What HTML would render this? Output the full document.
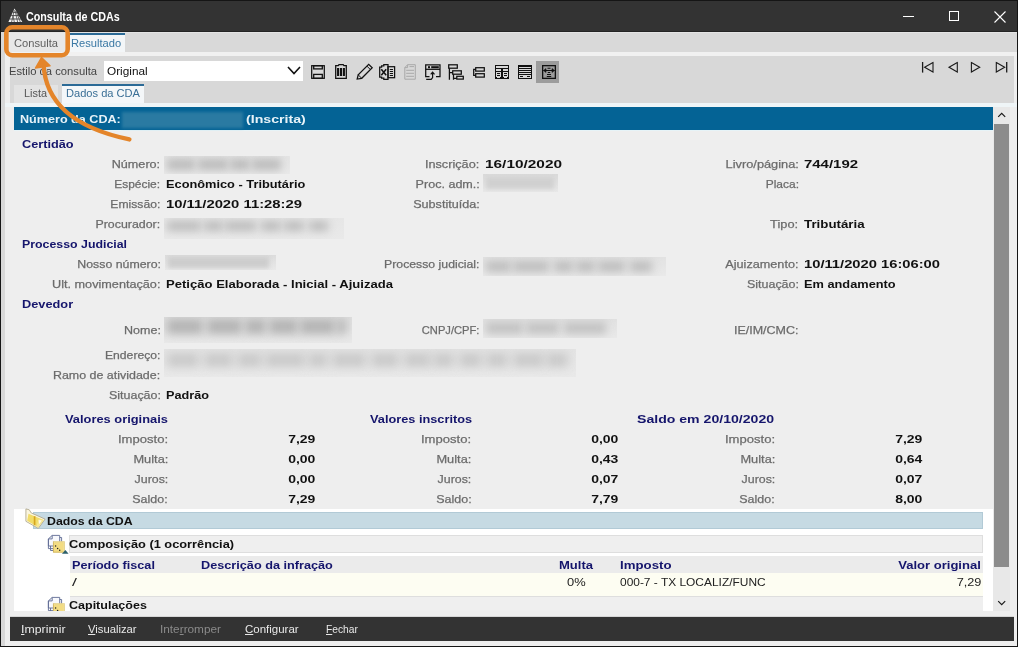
<!DOCTYPE html>
<html><head><meta charset="utf-8"><style>
html,body{margin:0;padding:0;}
body{width:1018px;height:647px;position:relative;overflow:hidden;background:#f0f0f0;font-family:"Liberation Sans",sans-serif;}
.t{position:absolute;white-space:nowrap;line-height:1;}
.r{position:absolute;box-sizing:border-box;}
svg.r{overflow:visible}
</style></head><body>
<div class="r" style="left:0px;top:0px;width:1018px;height:647px;background:#151515;"></div>
<div class="r" style="left:1px;top:1px;width:1016px;height:31px;background:#333333;"></div>
<div class="r" style="left:1px;top:31px;width:1016px;height:1px;background:#242424;"></div>
<div class="r" style="left:1px;top:32px;width:1016px;height:614px;background:#eeeeee;"></div>
<div class="r" style="left:1px;top:32px;width:4px;height:614px;background:#d8d8d8;"></div>
<div class="r" style="left:5px;top:32px;width:1012px;height:1px;background:#e4e4e4;"></div>
<div class="r" style="left:5px;top:33px;width:1012px;height:19px;background:#d9d9d9;"></div>
<div class="r" style="left:9px;top:33px;width:58px;height:19px;background:#e8e8e8;"></div>
<div class="r" style="left:69px;top:33px;width:56px;height:19px;background:#f3f6f8;"></div>
<div class="r" style="left:69px;top:33px;width:56px;height:2px;background:#2b6a96;"></div>
<div class="r" style="left:5px;top:52px;width:1012px;height:4px;background:#f1f1f1;"></div>
<div class="r" style="left:10px;top:56px;width:1004px;height:47px;background:#d8d8d8;"></div>
<div class="r" style="left:104px;top:61px;width:199px;height:20px;background:#ffffff;"></div>
<div class="r" style="left:14px;top:85px;width:44px;height:18px;background:#e3e3e3;"></div>
<div class="r" style="left:62px;top:84px;width:82px;height:20px;background:#f4f7f9;"></div>
<div class="r" style="left:62px;top:84px;width:82px;height:2px;background:#2b6a96;"></div>
<div class="r" style="left:5px;top:103px;width:1012px;height:4px;background:#eff5f7;"></div>
<div class="r" style="left:14px;top:107px;width:979px;height:23px;background:#046395;"></div>
<div class="r" style="left:14px;top:130px;width:979px;height:1px;background:#e6f3f7;"></div>
<div class="r" style="left:993px;top:107px;width:17px;height:504px;background:#e8e8e8;"></div>
<div class="r" style="left:994px;top:124px;width:15px;height:443px;background:#8c8c8c;"></div>
<div class="r" style="left:14px;top:509px;width:979px;height:102px;background:#ffffff;"></div>
<div class="r" style="left:10px;top:616px;width:1004px;height:1px;background:#d6d6d6;"></div>
<div class="r" style="left:10px;top:617px;width:1004px;height:24px;background:#333333;"></div>
<svg class="r" style="left:0;top:0" width="30" height="30" viewBox="0 0 30 30">
<polygon points="14.5,8.6 22.3,22 8.4,22" fill="#f4f4f4"/>
<path d="M9.5,19 H21 M11.2,15.6 H19 M12.8,12.4 H16.8" stroke="#3a3a3a" stroke-width="0.9" fill="none"/>
<path d="M14.3,10 L11.6,22 M15.2,11 L17.6,22 M13,15.6 L14.3,22 M16.5,12.4 L20.3,22" stroke="#4a4a4a" stroke-width="0.8" fill="none"/>
</svg>
<div class="t" style="left:26.00px;top:11.44px;font-size:12px;color:#ffffff;font-weight:bold;letter-spacing:0.0px;transform:scaleX(0.8941);transform-origin:left center;">Consulta de CDAs</div>
<div class="r" style="left:903px;top:16px;width:11px;height:1px;background:#ffffff;"></div>
<div class="r" style="left:949px;top:11px;width:10px;height:10px;border:1px solid #fff;"></div>
<svg class="r" style="left:994px;top:11px" width="12" height="12" viewBox="0 0 12 12"><path d="M0.5,0.5 L11.5,11.5 M11.5,0.5 L0.5,11.5" stroke="#fff" stroke-width="1.1"/></svg>
<div class="t" style="left:14.00px;top:38.49px;font-size:11px;color:#5f5f5f;font-weight:normal;letter-spacing:0.0px;transform:scaleX(1.0133);transform-origin:left center;">Consulta</div>
<div class="t" style="left:70.50px;top:38.49px;font-size:11px;color:#3a78a4;font-weight:normal;letter-spacing:0.0px;transform:scaleX(1.0132);transform-origin:left center;">Resultado</div>
<div class="t" style="left:9.20px;top:66.39px;font-size:11px;color:#444;font-weight:normal;letter-spacing:0.0px;transform:scaleX(1.0207);transform-origin:left center;">Estilo da consulta</div>
<div class="t" style="left:106.60px;top:66.39px;font-size:11px;color:#111;font-weight:normal;letter-spacing:0.0px;transform:scaleX(1.0711);transform-origin:left center;">Original</div>
<div class="t" style="left:23.90px;top:88.39px;font-size:11px;color:#555;font-weight:normal;letter-spacing:0.0px;transform:scaleX(0.9892);transform-origin:left center;">Lista</div>
<div class="t" style="left:66.30px;top:88.39px;font-size:11px;color:#3a6f96;font-weight:normal;letter-spacing:0.0px;transform:scaleX(1.0085);transform-origin:left center;">Dados da CDA</div>
<svg class="r" style="left:287px;top:66px" width="14" height="9" viewBox="0 0 14 9"><path d="M1,1 L7,7.5 L13,1" stroke="#111" stroke-width="1.6" fill="none"/></svg>
<div class="t" style="left:19.80px;top:114.17px;font-size:11.5px;color:#e6f2f8;font-weight:bold;letter-spacing:0.0px;transform:scaleX(1.0955);transform-origin:left center;">Número da CDA:</div>
<div class="r" style="left:122px;top:112px;width:121px;height:16px;background:#2a7aa2;filter:blur(1.5px)"></div>
<div class="t" style="left:246.00px;top:114.17px;font-size:11.5px;color:#e6f2f8;font-weight:bold;letter-spacing:0.0px;transform:scaleX(1.2314);transform-origin:left center;">(Inscrita)</div>
<svg class="r" style="left:0;top:0" width="1018" height="647" viewBox="0 0 1018 647"><path d="M998.2,116.8 L1001.7,113.3 L1005.2,116.8" stroke="#1a1a1a" stroke-width="1.2" fill="none"/><path d="M998.2,601.2 L1001.7,604.7 L1005.2,601.2" stroke="#1a1a1a" stroke-width="1.2" fill="none"/></svg>
<div class="t" style="left:22.00px;top:138.87px;font-size:11.5px;color:#15156c;font-weight:bold;letter-spacing:0.0px;transform:scaleX(1.1067);transform-origin:left center;">Certidão</div>
<div class="t" style="right:857.50px;top:159.27px;font-size:11.5px;color:#6b6b6b;font-weight:normal;letter-spacing:0.0px;-webkit-text-stroke:0.25px #6b6b6b;transform:scaleX(1.0967);transform-origin:right center;">Número:</div>
<div class="r" style="left:164px;top:156px;width:126px;height:18px;background:linear-gradient(#e4e4e4,#e9e9e9);overflow:hidden"><div style="position:absolute;left:3px;top:3px;width:28px;height:11px;background:#bababa;filter:blur(4.5px)"></div><div style="position:absolute;left:34px;top:3px;width:30px;height:11px;background:#bababa;filter:blur(4.5px)"></div><div style="position:absolute;left:66px;top:3px;width:20px;height:11px;background:#bababa;filter:blur(4.5px)"></div><div style="position:absolute;left:88px;top:3px;width:29px;height:11px;background:#bababa;filter:blur(4.5px)"></div></div>
<div class="t" style="right:538.50px;top:159.27px;font-size:11.5px;color:#6b6b6b;font-weight:normal;letter-spacing:0.0px;-webkit-text-stroke:0.25px #6b6b6b;transform:scaleX(1.1029);transform-origin:right center;">Inscrição:</div>
<div class="t" style="left:485.00px;top:159.27px;font-size:11.5px;color:#111;font-weight:bold;letter-spacing:0.0px;transform:scaleX(1.3380);transform-origin:left center;">16/10/2020</div>
<div class="t" style="right:219.50px;top:159.27px;font-size:11.5px;color:#6b6b6b;font-weight:normal;letter-spacing:0.0px;-webkit-text-stroke:0.25px #6b6b6b;transform:scaleX(1.1122);transform-origin:right center;">Livro/página:</div>
<div class="t" style="left:804.00px;top:159.27px;font-size:11.5px;color:#111;font-weight:bold;letter-spacing:0.0px;transform:scaleX(1.2990);transform-origin:left center;">744/192</div>
<div class="t" style="right:857.50px;top:179.27px;font-size:11.5px;color:#6b6b6b;font-weight:normal;letter-spacing:0.0px;-webkit-text-stroke:0.25px #6b6b6b;transform:scaleX(1.0421);transform-origin:right center;">Espécie:</div>
<div class="t" style="left:165.60px;top:179.27px;font-size:11.5px;color:#111;font-weight:bold;letter-spacing:0.0px;transform:scaleX(1.1122);transform-origin:left center;">Econômico - Tributário</div>
<div class="t" style="right:538.50px;top:179.27px;font-size:11.5px;color:#6b6b6b;font-weight:normal;letter-spacing:0.0px;-webkit-text-stroke:0.25px #6b6b6b;transform:scaleX(1.0914);transform-origin:right center;">Proc. adm.:</div>
<div class="r" style="left:483px;top:174px;width:75px;height:18px;background:linear-gradient(#dadada,#e9e9e9);overflow:hidden"><div style="position:absolute;left:3px;top:3px;width:68px;height:12px;background:#d0d0d0;filter:blur(2.2px)"></div></div>
<div class="t" style="right:219.50px;top:179.27px;font-size:11.5px;color:#6b6b6b;font-weight:normal;letter-spacing:0.0px;-webkit-text-stroke:0.25px #6b6b6b;transform:scaleX(1.0413);transform-origin:right center;">Placa:</div>
<div class="t" style="right:857.50px;top:199.27px;font-size:11.5px;color:#6b6b6b;font-weight:normal;letter-spacing:0.0px;-webkit-text-stroke:0.25px #6b6b6b;transform:scaleX(1.0562);transform-origin:right center;">Emissão:</div>
<div class="t" style="left:165.60px;top:199.27px;font-size:11.5px;color:#111;font-weight:bold;letter-spacing:0.0px;transform:scaleX(1.2888);transform-origin:left center;">10/11/2020 11:28:29</div>
<div class="t" style="right:538.50px;top:199.27px;font-size:11.5px;color:#6b6b6b;font-weight:normal;letter-spacing:0.0px;-webkit-text-stroke:0.25px #6b6b6b;transform:scaleX(1.0962);transform-origin:right center;">Substituída:</div>
<div class="t" style="right:857.50px;top:219.27px;font-size:11.5px;color:#6b6b6b;font-weight:normal;letter-spacing:0.0px;-webkit-text-stroke:0.25px #6b6b6b;transform:scaleX(1.0756);transform-origin:right center;">Procurador:</div>
<div class="r" style="left:164px;top:218px;width:180px;height:21px;background:linear-gradient(#e6e6e6,#e9e9e9);overflow:hidden"><div style="position:absolute;left:3px;top:3px;width:34px;height:10px;background:#bcbcbc;filter:blur(4.5px)"></div><div style="position:absolute;left:40px;top:3px;width:19px;height:10px;background:#bcbcbc;filter:blur(4.5px)"></div><div style="position:absolute;left:61px;top:3px;width:31px;height:10px;background:#bcbcbc;filter:blur(4.5px)"></div><div style="position:absolute;left:97px;top:3px;width:20px;height:10px;background:#bcbcbc;filter:blur(4.5px)"></div><div style="position:absolute;left:120px;top:3px;width:20px;height:10px;background:#bcbcbc;filter:blur(4.5px)"></div><div style="position:absolute;left:145px;top:3px;width:19px;height:10px;background:#bcbcbc;filter:blur(4.5px)"></div></div>
<div class="t" style="right:219.50px;top:219.27px;font-size:11.5px;color:#6b6b6b;font-weight:normal;letter-spacing:0.0px;-webkit-text-stroke:0.25px #6b6b6b;transform:scaleX(1.1160);transform-origin:right center;">Tipo:</div>
<div class="t" style="left:804.00px;top:219.27px;font-size:11.5px;color:#111;font-weight:bold;letter-spacing:0.0px;transform:scaleX(1.1571);transform-origin:left center;">Tributária</div>
<div class="t" style="left:21.60px;top:239.27px;font-size:11.5px;color:#15156c;font-weight:bold;letter-spacing:0.0px;transform:scaleX(1.0735);transform-origin:left center;">Processo Judicial</div>
<div class="t" style="right:857.50px;top:259.27px;font-size:11.5px;color:#6b6b6b;font-weight:normal;letter-spacing:0.0px;-webkit-text-stroke:0.25px #6b6b6b;transform:scaleX(1.0733);transform-origin:right center;">Nosso número:</div>
<div class="r" style="left:165px;top:255px;width:111px;height:15px;background:linear-gradient(#dcdcdc,#e9e9e9);overflow:hidden"><div style="position:absolute;left:3px;top:2px;width:101px;height:11px;background:#cdcdcd;filter:blur(2.2px)"></div></div>
<div class="t" style="right:538.50px;top:259.27px;font-size:11.5px;color:#6b6b6b;font-weight:normal;letter-spacing:0.0px;-webkit-text-stroke:0.25px #6b6b6b;transform:scaleX(1.0662);transform-origin:right center;">Processo judicial:</div>
<div class="r" style="left:483px;top:257px;width:183px;height:19px;background:linear-gradient(#e2e2e2,#e9e9e9);overflow:hidden"><div style="position:absolute;left:3px;top:4px;width:25px;height:11px;background:#bdbdbd;filter:blur(4.5px)"></div><div style="position:absolute;left:30px;top:4px;width:36px;height:11px;background:#bdbdbd;filter:blur(4.5px)"></div><div style="position:absolute;left:71px;top:4px;width:19px;height:11px;background:#bdbdbd;filter:blur(4.5px)"></div><div style="position:absolute;left:93px;top:4px;width:19px;height:11px;background:#bdbdbd;filter:blur(4.5px)"></div><div style="position:absolute;left:115px;top:4px;width:27px;height:11px;background:#bdbdbd;filter:blur(4.5px)"></div><div style="position:absolute;left:147px;top:4px;width:22px;height:11px;background:#bdbdbd;filter:blur(4.5px)"></div></div>
<div class="t" style="right:219.50px;top:259.27px;font-size:11.5px;color:#6b6b6b;font-weight:normal;letter-spacing:0.0px;-webkit-text-stroke:0.25px #6b6b6b;transform:scaleX(1.1014);transform-origin:right center;">Ajuizamento:</div>
<div class="t" style="left:804.00px;top:259.27px;font-size:11.5px;color:#111;font-weight:bold;letter-spacing:0.0px;transform:scaleX(1.2812);transform-origin:left center;">10/11/2020 16:06:00</div>
<div class="t" style="right:857.50px;top:279.27px;font-size:11.5px;color:#6b6b6b;font-weight:normal;letter-spacing:0.0px;-webkit-text-stroke:0.25px #6b6b6b;transform:scaleX(1.1009);transform-origin:right center;">Ult. movimentação:</div>
<div class="t" style="left:165.60px;top:279.27px;font-size:11.5px;color:#111;font-weight:bold;letter-spacing:0.0px;transform:scaleX(1.1371);transform-origin:left center;">Petição Elaborada - Inicial - Ajuizada</div>
<div class="t" style="right:219.50px;top:279.27px;font-size:11.5px;color:#6b6b6b;font-weight:normal;letter-spacing:0.0px;-webkit-text-stroke:0.25px #6b6b6b;transform:scaleX(1.0840);transform-origin:right center;">Situação:</div>
<div class="t" style="left:804.00px;top:279.27px;font-size:11.5px;color:#111;font-weight:bold;letter-spacing:0.0px;transform:scaleX(1.1116);transform-origin:left center;">Em andamento</div>
<div class="t" style="left:22.00px;top:299.27px;font-size:11.5px;color:#15156c;font-weight:bold;letter-spacing:0.0px;transform:scaleX(1.1108);transform-origin:left center;">Devedor</div>
<div class="t" style="right:857.50px;top:325.27px;font-size:11.5px;color:#6b6b6b;font-weight:normal;letter-spacing:0.0px;-webkit-text-stroke:0.25px #6b6b6b;transform:scaleX(1.0869);transform-origin:right center;">Nome:</div>
<div class="r" style="left:164px;top:317px;width:188px;height:26px;background:linear-gradient(#dedede,#e9e9e9);overflow:hidden"><div style="position:absolute;left:3px;top:2px;width:36px;height:15px;background:#b4b4b4;filter:blur(5.0px)"></div><div style="position:absolute;left:43px;top:2px;width:35px;height:15px;background:#b4b4b4;filter:blur(5.0px)"></div><div style="position:absolute;left:81px;top:2px;width:21px;height:15px;background:#b4b4b4;filter:blur(5.0px)"></div><div style="position:absolute;left:105px;top:2px;width:29px;height:15px;background:#b4b4b4;filter:blur(5.0px)"></div><div style="position:absolute;left:136px;top:2px;width:35px;height:15px;background:#b4b4b4;filter:blur(5.0px)"></div><div style="position:absolute;left:173px;top:2px;width:9px;height:15px;background:#b4b4b4;filter:blur(5.0px)"></div></div>
<div class="t" style="right:538.50px;top:325.27px;font-size:11.5px;color:#6b6b6b;font-weight:normal;letter-spacing:0.0px;-webkit-text-stroke:0.25px #6b6b6b;transform:scaleX(0.9700);transform-origin:right center;">CNPJ/CPF:</div>
<div class="r" style="left:483px;top:319px;width:134px;height:19px;background:linear-gradient(#e1e1e1,#e9e9e9);overflow:hidden"><div style="position:absolute;left:3px;top:3px;width:37px;height:12px;background:#c2c2c2;filter:blur(4.5px)"></div><div style="position:absolute;left:43px;top:3px;width:33px;height:12px;background:#c2c2c2;filter:blur(4.5px)"></div><div style="position:absolute;left:81px;top:3px;width:42px;height:12px;background:#c2c2c2;filter:blur(4.5px)"></div></div>
<div class="t" style="right:219.50px;top:325.27px;font-size:11.5px;color:#6b6b6b;font-weight:normal;letter-spacing:0.0px;-webkit-text-stroke:0.25px #6b6b6b;transform:scaleX(1.0856);transform-origin:right center;">IE/IM/CMC:</div>
<div class="t" style="right:857.50px;top:350.27px;font-size:11.5px;color:#6b6b6b;font-weight:normal;letter-spacing:0.0px;-webkit-text-stroke:0.25px #6b6b6b;transform:scaleX(1.0578);transform-origin:right center;">Endereço:</div>
<div class="r" style="left:164px;top:349px;width:412px;height:28px;background:linear-gradient(#e4e4e4,#e9e9e9);overflow:hidden"><div style="position:absolute;left:3px;top:4px;width:32px;height:14px;background:#cacaca;filter:blur(5.0px)"></div><div style="position:absolute;left:40px;top:4px;width:29px;height:14px;background:#cacaca;filter:blur(5.0px)"></div><div style="position:absolute;left:73px;top:4px;width:25px;height:14px;background:#cacaca;filter:blur(5.0px)"></div><div style="position:absolute;left:101px;top:4px;width:40px;height:14px;background:#cacaca;filter:blur(5.0px)"></div><div style="position:absolute;left:144px;top:4px;width:20px;height:14px;background:#cacaca;filter:blur(5.0px)"></div><div style="position:absolute;left:168px;top:4px;width:34px;height:14px;background:#cacaca;filter:blur(5.0px)"></div><div style="position:absolute;left:207px;top:4px;width:28px;height:14px;background:#cacaca;filter:blur(5.0px)"></div><div style="position:absolute;left:240px;top:4px;width:27px;height:14px;background:#cacaca;filter:blur(5.0px)"></div><div style="position:absolute;left:269px;top:4px;width:21px;height:14px;background:#cacaca;filter:blur(5.0px)"></div><div style="position:absolute;left:295px;top:4px;width:23px;height:14px;background:#cacaca;filter:blur(5.0px)"></div><div style="position:absolute;left:322px;top:4px;width:22px;height:14px;background:#cacaca;filter:blur(5.0px)"></div><div style="position:absolute;left:349px;top:4px;width:31px;height:14px;background:#cacaca;filter:blur(5.0px)"></div><div style="position:absolute;left:382px;top:4px;width:22px;height:14px;background:#cacaca;filter:blur(5.0px)"></div></div>
<div class="t" style="right:857.50px;top:370.27px;font-size:11.5px;color:#6b6b6b;font-weight:normal;letter-spacing:0.0px;-webkit-text-stroke:0.25px #6b6b6b;transform:scaleX(1.0814);transform-origin:right center;">Ramo de atividade:</div>
<div class="t" style="right:857.50px;top:390.27px;font-size:11.5px;color:#6b6b6b;font-weight:normal;letter-spacing:0.0px;-webkit-text-stroke:0.25px #6b6b6b;transform:scaleX(1.0840);transform-origin:right center;">Situação:</div>
<div class="t" style="left:165.60px;top:390.27px;font-size:11.5px;color:#111;font-weight:bold;letter-spacing:0.0px;transform:scaleX(1.1045);transform-origin:left center;">Padrão</div>
<div class="t" style="left:65.00px;top:414.27px;font-size:11.5px;color:#15156c;font-weight:bold;letter-spacing:0.0px;transform:scaleX(1.1177);transform-origin:left center;">Valores originais</div>
<div class="t" style="left:370.00px;top:414.27px;font-size:11.5px;color:#15156c;font-weight:bold;letter-spacing:0.0px;transform:scaleX(1.1092);transform-origin:left center;">Valores inscritos</div>
<div class="t" style="left:637.30px;top:414.27px;font-size:11.5px;color:#15156c;font-weight:bold;letter-spacing:0.0px;transform:scaleX(1.2253);transform-origin:left center;">Saldo em 20/10/2020</div>
<div class="t" style="right:850.00px;top:434.27px;font-size:11.5px;color:#6b6b6b;font-weight:normal;letter-spacing:0.0px;-webkit-text-stroke:0.25px #6b6b6b;transform:scaleX(1.1367);transform-origin:right center;">Imposto:</div>
<div class="t" style="right:703.00px;top:434.27px;font-size:11.5px;color:#111;font-weight:bold;letter-spacing:0.0px;transform:scaleX(1.2141);transform-origin:right center;">7,29</div>
<div class="t" style="right:546.50px;top:434.27px;font-size:11.5px;color:#6b6b6b;font-weight:normal;letter-spacing:0.0px;-webkit-text-stroke:0.25px #6b6b6b;transform:scaleX(1.1367);transform-origin:right center;">Imposto:</div>
<div class="t" style="right:399.50px;top:434.27px;font-size:11.5px;color:#111;font-weight:bold;letter-spacing:0.0px;transform:scaleX(1.2141);transform-origin:right center;">0,00</div>
<div class="t" style="right:243.00px;top:434.27px;font-size:11.5px;color:#6b6b6b;font-weight:normal;letter-spacing:0.0px;-webkit-text-stroke:0.25px #6b6b6b;transform:scaleX(1.1367);transform-origin:right center;">Imposto:</div>
<div class="t" style="right:95.50px;top:434.27px;font-size:11.5px;color:#111;font-weight:bold;letter-spacing:0.0px;transform:scaleX(1.2141);transform-origin:right center;">7,29</div>
<div class="t" style="right:850.00px;top:454.27px;font-size:11.5px;color:#6b6b6b;font-weight:normal;letter-spacing:0.0px;-webkit-text-stroke:0.25px #6b6b6b;transform:scaleX(1.1130);transform-origin:right center;">Multa:</div>
<div class="t" style="right:703.00px;top:454.27px;font-size:11.5px;color:#111;font-weight:bold;letter-spacing:0.0px;transform:scaleX(1.2141);transform-origin:right center;">0,00</div>
<div class="t" style="right:546.50px;top:454.27px;font-size:11.5px;color:#6b6b6b;font-weight:normal;letter-spacing:0.0px;-webkit-text-stroke:0.25px #6b6b6b;transform:scaleX(1.1130);transform-origin:right center;">Multa:</div>
<div class="t" style="right:399.50px;top:454.27px;font-size:11.5px;color:#111;font-weight:bold;letter-spacing:0.0px;transform:scaleX(1.2141);transform-origin:right center;">0,43</div>
<div class="t" style="right:243.00px;top:454.27px;font-size:11.5px;color:#6b6b6b;font-weight:normal;letter-spacing:0.0px;-webkit-text-stroke:0.25px #6b6b6b;transform:scaleX(1.1130);transform-origin:right center;">Multa:</div>
<div class="t" style="right:95.50px;top:454.27px;font-size:11.5px;color:#111;font-weight:bold;letter-spacing:0.0px;transform:scaleX(1.2141);transform-origin:right center;">0,64</div>
<div class="t" style="right:850.00px;top:474.27px;font-size:11.5px;color:#6b6b6b;font-weight:normal;letter-spacing:0.0px;-webkit-text-stroke:0.25px #6b6b6b;transform:scaleX(1.0775);transform-origin:right center;">Juros:</div>
<div class="t" style="right:703.00px;top:474.27px;font-size:11.5px;color:#111;font-weight:bold;letter-spacing:0.0px;transform:scaleX(1.2141);transform-origin:right center;">0,00</div>
<div class="t" style="right:546.50px;top:474.27px;font-size:11.5px;color:#6b6b6b;font-weight:normal;letter-spacing:0.0px;-webkit-text-stroke:0.25px #6b6b6b;transform:scaleX(1.0775);transform-origin:right center;">Juros:</div>
<div class="t" style="right:399.50px;top:474.27px;font-size:11.5px;color:#111;font-weight:bold;letter-spacing:0.0px;transform:scaleX(1.2141);transform-origin:right center;">0,07</div>
<div class="t" style="right:243.00px;top:474.27px;font-size:11.5px;color:#6b6b6b;font-weight:normal;letter-spacing:0.0px;-webkit-text-stroke:0.25px #6b6b6b;transform:scaleX(1.0775);transform-origin:right center;">Juros:</div>
<div class="t" style="right:95.50px;top:474.27px;font-size:11.5px;color:#111;font-weight:bold;letter-spacing:0.0px;transform:scaleX(1.2141);transform-origin:right center;">0,07</div>
<div class="t" style="right:850.00px;top:494.27px;font-size:11.5px;color:#6b6b6b;font-weight:normal;letter-spacing:0.0px;-webkit-text-stroke:0.25px #6b6b6b;transform:scaleX(1.0840);transform-origin:right center;">Saldo:</div>
<div class="t" style="right:703.00px;top:494.27px;font-size:11.5px;color:#111;font-weight:bold;letter-spacing:0.0px;transform:scaleX(1.2141);transform-origin:right center;">7,29</div>
<div class="t" style="right:546.50px;top:494.27px;font-size:11.5px;color:#6b6b6b;font-weight:normal;letter-spacing:0.0px;-webkit-text-stroke:0.25px #6b6b6b;transform:scaleX(1.0840);transform-origin:right center;">Saldo:</div>
<div class="t" style="right:399.50px;top:494.27px;font-size:11.5px;color:#111;font-weight:bold;letter-spacing:0.0px;transform:scaleX(1.2141);transform-origin:right center;">7,79</div>
<div class="t" style="right:243.00px;top:494.27px;font-size:11.5px;color:#6b6b6b;font-weight:normal;letter-spacing:0.0px;-webkit-text-stroke:0.25px #6b6b6b;transform:scaleX(1.0840);transform-origin:right center;">Saldo:</div>
<div class="t" style="right:95.50px;top:494.27px;font-size:11.5px;color:#111;font-weight:bold;letter-spacing:0.0px;transform:scaleX(1.2141);transform-origin:right center;">8,00</div>
<div class="r" style="left:33px;top:512px;width:950px;height:17px;background:#c6dae3;box-shadow: inset 0 0 0 1px #b2cad6;"></div>
<div class="t" style="left:46.60px;top:515.57px;font-size:11.5px;color:#111;font-weight:bold;letter-spacing:0.0px;transform:scaleX(1.0723);transform-origin:left center;">Dados da CDA</div>
<div class="r" style="left:69px;top:535px;width:914px;height:18px;background:#efefef;box-shadow: inset 0 0 0 1px #dedede;"></div>
<div class="t" style="left:69.00px;top:539.27px;font-size:11.5px;color:#111;font-weight:bold;letter-spacing:0.0px;transform:scaleX(1.1133);transform-origin:left center;">Composição (1 ocorrência)</div>
<div class="r" style="left:70px;top:556px;width:913px;height:17px;background:#ebebeb;"></div>
<div class="r" style="left:70px;top:573px;width:913px;height:23px;background:#fdfdf2;"></div>
<div class="r" style="left:70px;top:596px;width:913px;height:15px;background:#efefef;box-shadow: inset 0 1px 0 0 #dedede;"></div>
<div class="t" style="left:69.00px;top:599.97px;font-size:11.5px;color:#111;font-weight:bold;letter-spacing:0.0px;transform:scaleX(1.0877);transform-origin:left center;">Capitulações</div>
<div class="t" style="left:71.80px;top:560.27px;font-size:11.5px;color:#15156c;font-weight:bold;letter-spacing:0.0px;transform:scaleX(1.0992);transform-origin:left center;">Período fiscal</div>
<div class="t" style="left:200.60px;top:560.27px;font-size:11.5px;color:#15156c;font-weight:bold;letter-spacing:0.0px;transform:scaleX(1.1027);transform-origin:left center;">Descrição da infração</div>
<div class="t" style="right:425.00px;top:560.27px;font-size:11.5px;color:#15156c;font-weight:bold;letter-spacing:0.0px;transform:scaleX(1.1346);transform-origin:right center;">Multa</div>
<div class="t" style="left:620.00px;top:560.27px;font-size:11.5px;color:#15156c;font-weight:bold;letter-spacing:0.0px;transform:scaleX(1.1515);transform-origin:left center;">Imposto</div>
<div class="t" style="right:37.00px;top:560.27px;font-size:11.5px;color:#15156c;font-weight:bold;letter-spacing:0.0px;transform:scaleX(1.1353);transform-origin:right center;">Valor original</div>
<div class="t" style="left:72.00px;top:576.57px;font-size:11.5px;color:#222;font-weight:normal;letter-spacing:0.0px;transform:scaleX(1.5449);transform-origin:left center;">/</div>
<div class="t" style="right:432.00px;top:576.57px;font-size:11.5px;color:#222;font-weight:normal;letter-spacing:0.0px;transform:scaleX(1.1225);transform-origin:right center;">0%</div>
<div class="t" style="left:620.00px;top:576.57px;font-size:11.5px;color:#222;font-weight:normal;letter-spacing:0.0px;transform:scaleX(1.0372);transform-origin:left center;">000-7 - TX LOCALIZ/FUNC</div>
<div class="t" style="right:37.00px;top:576.57px;font-size:11.5px;color:#222;font-weight:normal;letter-spacing:0.0px;transform:scaleX(1.1060);transform-origin:right center;">7,29</div>
<svg class="r" style="left:0;top:0" width="1018" height="647" viewBox="0 0 1018 647">
<path d="M25.9,508.9 L29.3,509.8 L31.2,512.9 L45.1,519.1 L38.3,528.4 L25.9,521.3 Z" fill="#fbf6df" stroke="#aaa184" stroke-width="0.8" stroke-linejoin="round"/>
<path d="M28.5,513.8 L43.6,519.9 L38,527.3 L27.2,520.8 Z" fill="#f2dc68"/>
<path d="M38.6,519 L43.6,519.9 L38,527.3 L36.5,526.5 Z" fill="#f6e690"/>
<path d="M34.6,516.2 V525.2" stroke="#d6a51e" stroke-width="1.7"/>
<path d="M38.6,519.9 L41.8,520.5 L39.2,524.3 Z" fill="#fffbea"/>
</svg>
<div class="r" style="left:0;top:0;width:1018px;height:611px;overflow:hidden"><svg style="position:absolute;left:0;top:0px" width="1018" height="647" viewBox="0 0 1018 647">
<path d="M50.5,537.5 H61.6 V550.5 H50.5 Z" fill="#f5f6fb" stroke="#5f6b93" stroke-width="0.9"/>
<path d="M52.2,535.4 H59.7 V546 H48.4 V538.9 Z" fill="#f7f8fc" stroke="#5f6b93" stroke-width="0.9"/>
<path d="M48.4,538.9 H52.2 V535.4" fill="none" stroke="#5f6b93" stroke-width="0.9"/>
<path d="M48.4,538.9 V548.6 H53" fill="none" stroke="#5f6b93" stroke-width="0.9"/>
<rect x="53.4" y="541.8" width="10.8" height="10.4" fill="#f3dc82" stroke="#cfb257" stroke-width="0.9"/>
<path d="M53.8,542.3 L55.3,541.9 H64 L63.8,551.8" fill="none" stroke="#f8ecb0" stroke-width="0.8"/>
<circle cx="55.6" cy="546.1" r="0.75" fill="#222"/><circle cx="57.6" cy="548.4" r="0.75" fill="#222"/><circle cx="59.7" cy="550.2" r="0.75" fill="#222"/>
</svg></div>
<div class="r" style="left:0;top:0;width:1018px;height:611px;overflow:hidden"><svg style="position:absolute;left:0;top:62px" width="1018" height="647" viewBox="0 0 1018 647">
<path d="M50.5,537.5 H61.6 V550.5 H50.5 Z" fill="#f5f6fb" stroke="#5f6b93" stroke-width="0.9"/>
<path d="M52.2,535.4 H59.7 V546 H48.4 V538.9 Z" fill="#f7f8fc" stroke="#5f6b93" stroke-width="0.9"/>
<path d="M48.4,538.9 H52.2 V535.4" fill="none" stroke="#5f6b93" stroke-width="0.9"/>
<path d="M48.4,538.9 V548.6 H53" fill="none" stroke="#5f6b93" stroke-width="0.9"/>
<rect x="53.4" y="541.8" width="10.8" height="10.4" fill="#f3dc82" stroke="#cfb257" stroke-width="0.9"/>
<path d="M53.8,542.3 L55.3,541.9 H64 L63.8,551.8" fill="none" stroke="#f8ecb0" stroke-width="0.8"/>
<circle cx="55.6" cy="546.1" r="0.75" fill="#222"/><circle cx="57.6" cy="548.4" r="0.75" fill="#222"/><circle cx="59.7" cy="550.2" r="0.75" fill="#222"/>
</svg></div>
<svg class="r" style="left:0;top:0" width="1018" height="647" viewBox="0 0 1018 647"><polygon points="61.9,553.8 68.6,553.8 65.4,550" fill="#2b5f6b"/></svg>
<div class="t" style="left:20.70px;top:623.69px;font-size:11px;color:#e8e8e8;font-weight:normal;letter-spacing:0.0px;transform:scaleX(1.1199);transform-origin:left center;"><u>I</u>mprimir</div>
<div class="t" style="left:87.50px;top:623.69px;font-size:11px;color:#e8e8e8;font-weight:normal;letter-spacing:0.0px;transform:scaleX(1.0232);transform-origin:left center;"><u>V</u>isualizar</div>
<div class="t" style="left:160.10px;top:623.69px;font-size:11px;color:#8a8a8a;font-weight:normal;letter-spacing:0.0px;transform:scaleX(1.0725);transform-origin:left center;">Inte<u>r</u>romper</div>
<div class="t" style="left:244.60px;top:623.69px;font-size:11px;color:#e8e8e8;font-weight:normal;letter-spacing:0.0px;transform:scaleX(1.0433);transform-origin:left center;"><u>C</u>onfigurar</div>
<div class="t" style="left:326.20px;top:623.69px;font-size:11px;color:#e8e8e8;font-weight:normal;letter-spacing:0.0px;transform:scaleX(0.9310);transform-origin:left center;"><u>F</u>echar</div>

<svg class="r" style="left:0;top:0" width="1018" height="120" viewBox="0 0 1018 120" fill="none" stroke="#111" stroke-width="1.25" stroke-linejoin="miter">
<!-- save -->
<rect x="311.7" y="65.7" width="12.6" height="12.6"/>
<rect x="313.7" y="65.7" width="8.6" height="3.2" stroke-width="1.3"/>
<rect x="313.7" y="74.4" width="8.6" height="3.9" stroke-width="1.3"/>
<!-- trash -->
<path d="M335.7,65.7 H338.3 L339,64.6 H343.2 L343.9,65.7 H346.3 V78.3 H335.7 Z"/>
<path d="M338.1,68 V76 M341,68 V76 M343.9,68 V76" stroke-width="2.1"/>
<!-- pencil -->
<path d="M357.2,79 L358.2,74.8 L368.7,64.3 L372.2,67.8 L361.7,78.3 Z"/>
<path d="M358.2,74.8 L361.7,78.3 M366.9,66.1 L370.4,69.6" stroke-width="1.0"/>

<!-- excel -->
<path d="M388,64.7 H383.8 V65.8 H381.6 V67 H379.7 V77 H381.6 V78.2 H383.8 V79.3 H388 Z"/>
<rect x="388" y="66.7" width="6.6" height="11"/>
<path d="M389.8,69.5 H393 M389.8,71.5 H393 M389.8,73.5 H393 M389.8,75.5 H393" stroke-width="1.1"/>
<path d="M381.3,69.3 L386.2,75.2 M386.2,69.3 L381.3,75.2" stroke-width="1.5"/>
<!-- doc disabled -->
<path d="M407.6,64.7 H415.3 V79.2 H404.8 V67.6 Z" stroke="#a9a9a9" stroke-width="1"/>
<path d="M404.8,67.6 H407.6 V64.7" stroke="#a9a9a9" stroke-width="1"/>
<path d="M409.5,66.6 H414 M406.2,70.3 H414 M406.2,73.3 H414 M406.2,76.3 H414" stroke="#a9a9a9" stroke-width="1"/>
<!-- window arrow -->
<path d="M429.5,76.5 H425.7 V64.8 H440 V76.5 H436"/>
<path d="M425.7,69.3 H440"/>
<rect x="428" y="66.2" width="2" height="2" fill="#111" stroke="none"/>
<rect x="431.2" y="66.2" width="7.6" height="2" fill="#111" stroke="none"/>
<path d="M432.6,72.2 V77.5 L431.2,79.3 H426.2 M430.7,74.3 L432.6,72.2 L434.5,74.3" stroke-width="1.2"/>
<!-- tree -->
<rect x="448.7" y="64.8" width="8.6" height="3.4"/>
<rect x="452.7" y="70.8" width="8.6" height="3.4"/>
<rect x="456.8" y="76.3" width="6.5" height="2.8"/>
<path d="M449.4,68.2 V79.7 M449.4,72.6 H452.7 M453.5,74.2 V79.7 M453.5,78.4 H456.8"/>
<!-- two boxes -->
<rect x="475.7" y="67.7" width="8.6" height="3.4"/>
<rect x="475.7" y="73.7" width="8.6" height="3.4"/>
<path d="M475.7,69.3 H473.7 V75.3 H475.7"/>
</svg>
<svg class="r" style="left:495px;top:65px" width="14" height="14" viewBox="0 0 14 14" shape-rendering="crispEdges">
<path fill="#111" d="M0,0H14V14H0Z M1,1V3H13V1Z M1,4V6H6V4Z M8,4V6H13V4Z M1,7V13H13V7Z"/>
<path fill="#111" d="M2,8H5V9H2Z M2,10H5V11H2Z M9,8H12V9H9Z M9,10H12V11H9Z M6,7H8V13H6Z M1,12H2V13H1Z M5,12H6V13H5Z M8,12H9V13H8Z M12,12H13V13H12Z"/>
</svg>
<svg class="r" style="left:518px;top:65px" width="14" height="14" viewBox="0 0 14 14" shape-rendering="crispEdges">
<path fill="#111" d="M0,0H14V14H0Z M1,2V3H13V2Z M1,4V5H13V4Z M1,6V7H13V6Z M1,8V9H13V8Z M1,10V13H13V10Z"/>
<path fill="#111" d="M2,11H5V12H2Z M9,11H12V12H9Z"/>
</svg>
<div class="r" style="left:536px;top:61px;width:23px;height:22px;background:#9c9c9c"></div>
<svg class="r" style="left:542px;top:65px" width="14" height="14" viewBox="0 0 14 14" fill="none" stroke="#111" stroke-width="1.3">
<rect x="0.65" y="0.65" width="12.7" height="12.7"/>
<path d="M1.5,5.5 H12.5 M5.5,3.2 H8.5 M5.8,7.5 H8.2 M5,9.5 H9 M4.8,11.5 H9.2" stroke-width="1.1"/>
<path d="M1.5,5.5 L4,3.6 V7.4 Z M12.5,5.5 L10,3.6 V7.4 Z" fill="#111" stroke-width="0.6"/>
</svg>

<svg class="r" style="left:0;top:0" width="1018" height="90" viewBox="0 0 1018 90" fill="none" stroke="#1a1a1a" stroke-width="1.1">
<path d="M922.6,62 V72.6" stroke-width="1.3"/><path d="M933,62.6 L924.6,67.3 L933,72 Z"/>
<path d="M957.3,62.6 L949,67.3 L957.3,72 Z"/>
<path d="M971.4,62.6 L979.7,67.3 L971.4,72 Z"/>
<path d="M996.3,62.6 L1004.7,67.3 L996.3,72 Z"/><path d="M1006.7,62 V72.6" stroke-width="1.3"/></svg>
<svg class="r" style="left:0;top:0" width="1018" height="647" viewBox="0 0 1018 647">
<rect x="6.3" y="27.3" width="61.4" height="27.9" rx="6" ry="6" fill="none" stroke="#e4852a" stroke-width="4.6"/>
<path d="M43.5,64 C45.5,105.1 76.3,128.4 129.4,139.4" fill="none" stroke="#e4852a" stroke-width="4.4" stroke-linecap="round"/>
<polygon points="41.5,57.5 35.5,68 50,65.8" fill="#e4852a" stroke="#e4852a" stroke-width="1.5" stroke-linejoin="round"/>
</svg>
</body></html>
